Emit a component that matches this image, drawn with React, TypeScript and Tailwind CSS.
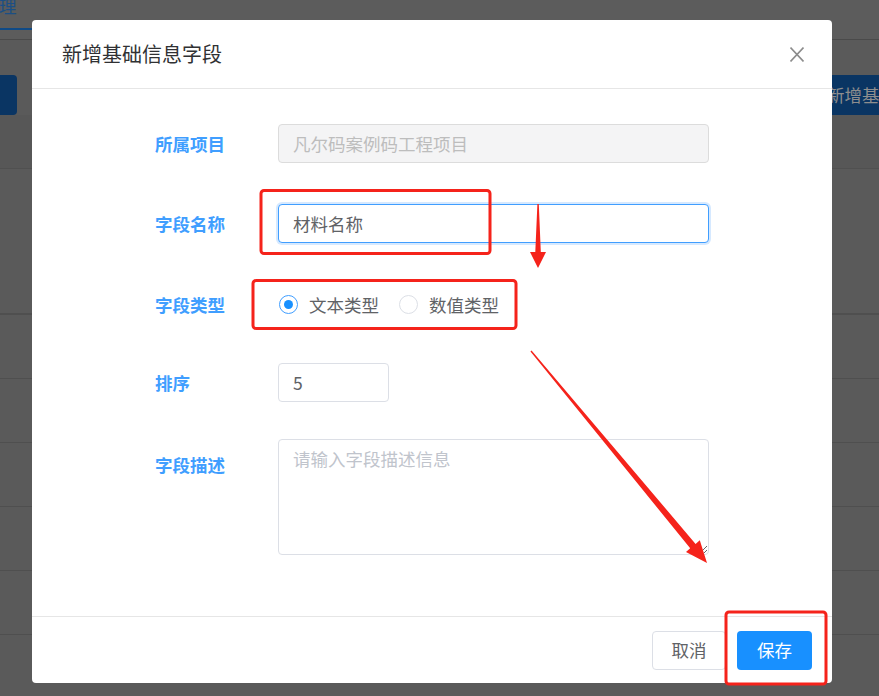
import React from "react";

const font = { fontFamily: '"Noto Sans CJK SC", "Noto Sans", sans-serif' };

function FieldRow({ label, top, children, labelTop }: { label: string; top: string; children: React.ReactNode; labelTop?: boolean }) {
  return (
    <div className={`flex ${labelTop ? "items-start" : "items-center"} ${top}`}>
      <div className={`w-[123px] shrink-0 text-[17.5px] font-bold leading-none text-[#409eff] ${labelTop ? "pt-[17px]" : ""}`}>{label}</div>
      {children}
    </div>
  );
}

function Radio({ checked, label }: { checked?: boolean; label: string }) {
  return (
    <label className="flex items-center gap-[11px]">
      <span
        className={`flex h-[19px] w-[19px] items-center justify-center rounded-full border bg-white ${
          checked ? "border-[#409eff]" : "border-[#dcdfe6]"
        }`}
      >
        {checked && <span className="h-[9px] w-[9px] rounded-full bg-[#1890ff]" />}
      </span>
      <span className="text-[17.5px] leading-none text-[#606266]">{label}</span>
    </label>
  );
}

function Background() {
  return (
    <div className="flex flex-col">
      <div className="relative h-[40px] border-b border-[#4a4a4a] bg-[#5c5c5c]">
        <span className="absolute left-[-1px] top-[-3px] text-[17.5px] leading-none text-[#1b4f85]">理</span>
        <div className="absolute left-0 top-[28px] h-[2px] w-[40px] bg-[#0f4a86]" />
      </div>
      <div className="flex h-[75px] items-end justify-between bg-[#5a5a5a]">
        <div className="h-[40px] w-[17px] rounded-r-[4px] bg-[#0a3563]" />
        <div className="flex h-[40px] w-[90px] items-center rounded-l-[4px] bg-[#0a3563] pl-[38px] text-[17.5px] text-[#8e8e8e]">
          <span className="whitespace-nowrap">新增基础</span>
        </div>
      </div>
      <div className="h-[54px] border-b border-[#505050] bg-[#575757]" />
      <div className="h-[146px] border-b-2 border-[#4f4f4f] bg-[#5a5a5a]" />
      {[0, 1, 2, 3, 4].map((i) => (
        <div key={i} className="h-[64px] border-b border-[#4f4f4f] bg-[#5a5a5a]" />
      ))}
    </div>
  );
}

function Annotations() {
  return (
    <svg className="pointer-events-none absolute left-0 top-0" width="879" height="696" viewBox="0 0 879 696">
      <g fill="none" stroke="#f5231b" strokeWidth="3">
        <rect x="261" y="190.5" width="229" height="63" rx="3" />
        <rect x="253" y="280.5" width="263" height="48" rx="3" />
        <rect x="726" y="612" width="100" height="72" rx="3" />
      </g>
      <polygon fill="#f5231b" points="537.4,204 538.8,204 540.8,252 546,252 538,268 530,252 535.3,252" />
      <polygon
        fill="#f5231b"
        points="531.54,350.55 695.6,543.9 699.8,540.3 707,563 686,551.9 690.2,548.3 530.46,351.45"
      />
    </svg>
  );
}

export default function App() {
  return (
    <div className="relative h-[696px] w-[879px] overflow-hidden bg-[#5a5a5a]" style={font}>
      <Background />

      <div className="absolute left-[32px] top-[20px] flex h-[663px] w-[800px] flex-col rounded-[4px] bg-white">
        <div className="flex h-[69px] shrink-0 items-center justify-between border-b border-[#e6e6e6] pl-[30px] pr-[28px]">
          <h2 className="text-[20px] leading-none text-[#303133]">新增基础信息字段</h2>
          <svg width="14" height="15" viewBox="0 0 14 15" className="text-[#8c8c8c]">
            <path d="M0.5 0.5L13.5 14.5M13.5 0.5L0.5 14.5" stroke="currentColor" strokeWidth="1.6" fill="none" />
          </svg>
        </div>

        <div className="flex flex-1 flex-col pl-[123px] pt-[35px]">
          <FieldRow label="所属项目" top="">
            <input
              disabled
              value="凡尔码案例码工程项目"
              readOnly
              className="h-[39px] w-[431px] rounded-[4px] border border-[#dcdcdc] bg-[#f4f4f5] px-[14px] text-[17.5px] text-[#bdbdbd] outline-none"
            />
          </FieldRow>
          <FieldRow label="字段名称" top="mt-[41px]">
            <input
              defaultValue="材料名称"
              className="h-[39px] w-[431px] rounded-[4px] border border-[#409eff] bg-white px-[14px] text-[17.5px] text-[#606266] shadow-[0_0_0_2px_#d6e9ff] outline-none"
            />
          </FieldRow>
          <FieldRow label="字段类型" top="mt-[42px] h-[39px]">
            <div className="flex items-center gap-[20px] pl-[1px]">
              <Radio checked label="文本类型" />
              <Radio label="数值类型" />
            </div>
          </FieldRow>
          <FieldRow label="排序" top="mt-[39px]">
            <input
              defaultValue="5"
              className="h-[39px] w-[111px] rounded-[4px] border border-[#dcdfe6] bg-white px-[14px] text-[17.5px] text-[#606266] outline-none"
            />
          </FieldRow>
          <FieldRow label="字段描述" top="mt-[37px]" labelTop>
            <textarea
              placeholder="请输入字段描述信息"
              className="h-[116px] w-[431px] rounded-[4px] border border-[#dcdfe6] bg-white px-[14px] py-[6px] text-[17.5px] leading-[26px] text-[#606266] outline-none placeholder:text-[#c0c4cc]"
            />
          </FieldRow>
        </div>

        <div className="flex h-[67px] shrink-0 items-center justify-end gap-[11px] border-t border-[#e6e6e6] pr-[20px]">
          <button className="h-[39px] w-[74px] rounded-[4px] border border-[#dcdfe6] bg-white text-[17.5px] text-[#606266]">取消</button>
          <button className="h-[39px] w-[75px] rounded-[4px] bg-[#1890ff] text-[17.5px] text-white">保存</button>
        </div>
      </div>

      <Annotations />
    </div>
  );
}
